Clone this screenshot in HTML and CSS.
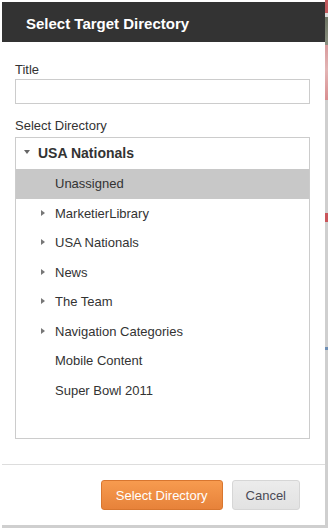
FILE: index.html
```html
<!DOCTYPE html>
<html lang="en">
<head>
  <meta charset="UTF-8" />
  <meta name="viewport" content="width=device-width, initial-scale=1.0"/>
  <title>Select Target Directory</title>
  <link rel="stylesheet" href="styles.css">
</head>
<body>
  <div class="screen">
    <div class="frame">
      <div class="dialog">
        <div class="dialog-header">Select Target Directory</div>

        <div class="dialog-body">
          <label class="field-label" for="title">Title</label>
          <input class="text-input" id="title" type="text">

          <div class="field-label dir-label">Select Directory</div>
          <div class="tree">
            <div class="tree-row root"><span class="caret down"></span>USA Nationals</div>
            <div class="tree-row selected"><span class="caret none"></span>Unassigned</div>
            <div class="tree-row"><span class="caret"></span>MarketierLibrary</div>
            <div class="tree-row"><span class="caret"></span>USA Nationals</div>
            <div class="tree-row"><span class="caret"></span>News</div>
            <div class="tree-row"><span class="caret"></span>The Team</div>
            <div class="tree-row"><span class="caret"></span>Navigation Categories</div>
            <div class="tree-row"><span class="caret none"></span>Mobile Content</div>
            <div class="tree-row"><span class="caret none"></span>Super Bowl 2011</div>
          </div>
        </div>

        <div class="dialog-footer">
          <button class="btn btn-primary">Select Directory</button>
          <button class="btn">Cancel</button>
        </div>
      </div>
      <div class="frame-bottom"></div>
    </div>
    <div class="edge"></div>
  </div>
</body>
</html>
```

FILE: styles.css
```css
body {
  margin: 0;
  padding: 0;
  background: #fff;
  font-family: "Liberation Sans", Arial, sans-serif;
  color: #333;
}

.screen {
  display: flex;
  padding-left: 2px;
  height: 528px;
}

.frame {
  width: 323px;
  padding-top: 2px;
  display: flex;
  flex-direction: column;
}

.dialog {
  height: 523px;
  background: #fff;
  display: flex;
  flex-direction: column;
}

.frame-bottom {
  height: 3px;
  background: #cfcfcf;
}

.edge {
  width: 3px;
  height: 528px;
  background: linear-gradient(to bottom,
    #c25a5e 0, #c25a5e 13px,
    #dadada 13px, #dadada 17px,
    #6d7363 17px, #8a8f7f 45px,
    #d99a9c 45px, #e3b5b5 70px, #d98e90 100px,
    #cfcfcf 100px, #cfcfcf 213px,
    #c9555a 213px, #c9555a 222px,
    #cfcfcf 222px, #cfcfcf 347px,
    #6f8fb5 347px, #6f8fb5 350px,
    #cfcfcf 350px);
}

.dialog-header {
  height: 40px;
  box-sizing: border-box;
  padding: 4px 0 0 24px;
  line-height: 36px;
  background-color: #333;
  color: #fff;
  font-size: 15px;
  font-weight: bold;
}

.dialog-body {
  flex: 1;
  display: flex;
  flex-direction: column;
  padding: 20px 15px 25px 13px;
}

.field-label {
  display: block;
  font-size: 13px;
  line-height: 16px;
  color: #333;
}

.text-input {
  margin: 1px 0 0;
  height: 25px;
  box-sizing: border-box;
  border: 1px solid #ccc;
  padding: 0 5px;
  font-family: inherit;
  font-size: 13px;
  outline: none;
}

.dir-label {
  margin-top: 14px;
}

.tree {
  margin-top: 3px;
  height: 302px;
  box-sizing: border-box;
  border: 1px solid #ccc;
}

.tree-row {
  display: flex;
  align-items: center;
  height: 29.5px;
  padding-left: 25px;
  font-size: 13px;
  color: #333;
}

.tree-row.root {
  height: 31px;
  box-sizing: border-box;
  padding: 0 0 2px 8px;
  font-size: 14px;
  font-weight: bold;
}

.tree-row.selected {
  background-color: #c8c8c8;
}

.caret {
  width: 14px;
  flex: none;
  position: relative;
  height: 7px;
}

.caret::before {
  content: "";
  position: absolute;
  left: 0;
  top: 0;
  border-left: 4px solid #777;
  border-top: 3.5px solid transparent;
  border-bottom: 3.5px solid transparent;
}

.caret.down::before {
  top: 1px;
  border-top: 4px solid #666;
  border-left: 3.5px solid transparent;
  border-right: 3.5px solid transparent;
  border-bottom: 0;
}

.caret.none::before {
  display: none;
}

.dialog-footer {
  border-top: 1px solid #ddd;
  padding: 15px 25px;
  display: flex;
  justify-content: flex-end;
  gap: 9px;
}

.btn {
  height: 30px;
  padding: 0 13px;
  border: 1px solid #d6d6d6;
  border-radius: 3px;
  background: linear-gradient(to bottom, #ececec, #e2e2e2);
  color: #4a4a55;
  font-family: inherit;
  font-size: 13px;
  cursor: pointer;
}

.btn-primary {
  padding: 0 14px;
  border-color: #d8762f;
  background: linear-gradient(to bottom, #f79b4f, #e7823a);
  color: #fff;
}
```
